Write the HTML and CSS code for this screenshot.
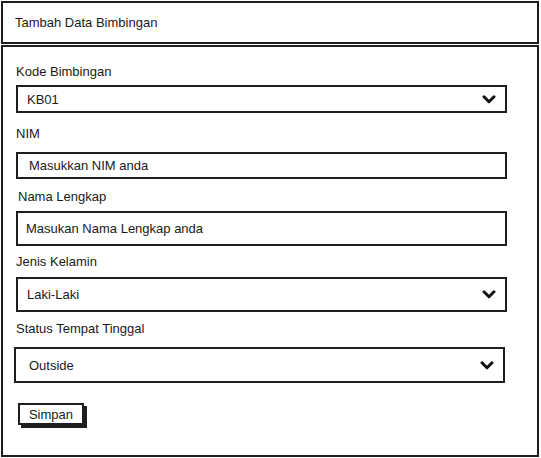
FILE: index.html
```html
<!DOCTYPE html>
<html>
<head>
<meta charset="utf-8">
<link rel="stylesheet" href="styles.css">
</head>
<body>
<div class="page">
  <div class="header">Tambah Data Bimbingan</div>
  <div class="panel">
    <div class="field f1">
      <div class="label">Kode Bimbingan</div>
      <div class="control select h28">
        <span>KB01</span>
        <svg class="chev" width="14" height="9" viewBox="0 0 14 9"><path d="M2 1.8 L7 6.8 L12 1.8" fill="none" stroke="#111" stroke-width="3" stroke-linecap="round" stroke-linejoin="round"/></svg>
      </div>
    </div>
    <div class="field f2">
      <div class="label">NIM</div>
      <div class="control h27 pad13"><span>Masukkan NIM anda</span></div>
    </div>
    <div class="field f3">
      <div class="label indent2">Nama Lengkap</div>
      <div class="control h35 pad10"><span>Masukan Nama Lengkap anda</span></div>
    </div>
    <div class="field f4">
      <div class="label">Jenis Kelamin</div>
      <div class="control select h35">
        <span>Laki-Laki</span>
        <svg class="chev" width="14" height="9" viewBox="0 0 14 9"><path d="M2 1.8 L7 6.8 L12 1.8" fill="none" stroke="#111" stroke-width="3" stroke-linecap="round" stroke-linejoin="round"/></svg>
      </div>
    </div>
    <div class="field f5">
      <div class="label">Status Tempat Tinggal</div>
      <div class="control select h36 shift pad15">
        <span>Outside</span>
        <svg class="chev" width="14" height="9" viewBox="0 0 14 9"><path d="M2 1.8 L7 6.8 L12 1.8" fill="none" stroke="#111" stroke-width="3" stroke-linecap="round" stroke-linejoin="round"/></svg>
      </div>
    </div>
    <div class="actions">
      <div class="button">Simpan</div>
    </div>
  </div>
</div>
</body>
</html>
```
FILE: styles.css
```css
html, body {
  margin: 0;
  padding: 0;
  background: #fff;
}
body {
  font-family: "Liberation Sans", Arial, sans-serif;
  font-size: 13px;
  color: #1a1a1a;
}
.page {
  width: 539px;
  padding-top: 1px;
  padding-left: 1px;
}
.header {
  height: 43px;
  width: 538px;
  border: 2px solid #1e1e1e;
  padding-left: 12px;
  display: flex;
  align-items: center;
  box-sizing: border-box;
}
.panel {
  margin-top: 1px;
  border: 2px solid #1e1e1e;
  width: 538px;
  height: 412px;
  padding-left: 13px;
  padding-right: 30px;
  box-sizing: border-box;
  display: flex;
  flex-direction: column;
}
.field {
  display: flex;
  flex-direction: column;
}
.label {
  line-height: 16px;
  height: 16px;
}
.indent2 { padding-left: 2px; }
.control {
  border: 2px solid #1e1e1e;
  background: #fff;
  display: flex;
  align-items: center;
  padding-left: 9px;
  padding-right: 9px;
  box-sizing: border-box;
}
.control.select {
  justify-content: space-between;
}
.pad13 { padding-left: 11px; }
.pad10 { padding-left: 8px; }
.pad15 { padding-left: 13px; }
.h28 { height: 28px; }
.h27 { height: 27px; }
.h35 { height: 35px; }
.h36 { height: 36px; }
.shift { margin-left: -2px; margin-right: 2px; }
.f1 { margin-top: 17px; }
.f1 .label { margin-bottom: 5px; }
.f2 { margin-top: 13px; }
.f2 .label { margin-bottom: 10px; }
.f3 { margin-top: 10px; }
.f3 .label { margin-bottom: 6px; }
.f4 { margin-top: 8px; }
.f4 .label { margin-bottom: 7px; }
.f5 { margin-top: 9px; }
.f5 .label { margin-bottom: 10px; }
.actions {
  margin-top: 20px;
  padding-left: 2px;
  display: flex;
}
.button {
  border: 2px solid #1e1e1e;
  height: 22px;
  box-sizing: border-box;
  width: 66px;
  display: flex;
  align-items: center;
  justify-content: center;
  background: #fff;
  box-shadow: 3px 3px 0 #1e1e1e;
}
```
